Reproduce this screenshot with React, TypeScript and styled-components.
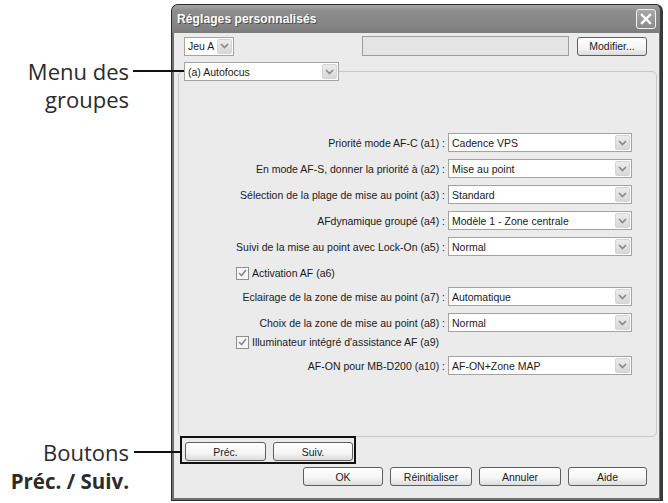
import React from 'react';
import styled, { createGlobalStyle } from 'styled-components';

const Global = createGlobalStyle`
  html, body { margin: 0; padding: 0; background: #ffffff; }
  body { width: 668px; height: 503px; overflow: hidden; }
  * { box-sizing: border-box; }
`;

const UI_FONT = `"Liberation Sans", Arial, sans-serif`;

const Page = styled.div`
  position: relative;
  width: 668px;
  height: 503px;
  display: flex;
  padding: 4px 5px 2px 171px;
  background: #ffffff;
`;

const Callout = styled.div<{ $top: number; $lineTop: number; $lineLeft: number; $lineWidth: number }>`
  position: absolute;
  left: 0;
  top: ${p => p.$top}px;
  width: 129px;
  text-align: right;
  font-family: "Open Sans", "Noto Sans", sans-serif;
  font-size: 22px;
  line-height: 28px;
  color: #2b2b2b;
  &::after {
    content: '';
    position: absolute;
    left: ${p => p.$lineLeft}px;
    top: ${p => p.$lineTop}px;
    width: ${p => p.$lineWidth}px;
    height: 2px;
    background: #111;
  }
`;

const CalloutStrong = styled.span`
  font-weight: 700;
  font-size: 20.5px;
`;

const Highlight = styled.div`
  position: absolute;
  left: 180px;
  top: 436px;
  width: 176px;
  height: 28px;
  border: 2px solid #111;
  pointer-events: none;
`;

const Window = styled.div`
  width: 492px;
  height: 497px;
  display: flex;
  flex-direction: column;
  background: #6f6f6f;
  border: 1px solid #2e2e2e;
  border-right: 3px solid #3a3a3a;
  border-radius: 7px 7px 0 0;
  overflow: hidden;
`;

const TitleBar = styled.div`
  height: 28px;
  flex: none;
  display: flex;
  align-items: center;
  justify-content: space-between;
  padding: 0 4px 0 5px;
  background: linear-gradient(#a6a6a6 0%, #8d8d8d 20%, #868686 70%, #7b7b7b 100%);
`;

const Title = styled.span`
  font-family: "Liberation Sans", Arial, sans-serif;
  font-weight: 700;
  font-size: 12px;
  letter-spacing: 0.1px;
  color: #ffffff;
  text-shadow: 1px 1px 0 #4a4a4a;
`;

const CloseButton = styled.div`
  width: 20px;
  height: 20px;
  border: 1px solid #f2f2f2;
  border-radius: 3px;
  background: linear-gradient(#a9a9a9, #8a8a8a);
  display: flex;
  align-items: center;
  justify-content: center;
`;

const Body = styled.div`
  flex: 1;
  display: flex;
  flex-direction: column;
  margin: 0 1px 2px 2px;
  padding: 3px 0 12px 0;
  background: #ebebeb;
  font-family: ${UI_FONT};
  font-size: 10.5px;
  color: #1a1a1a;
`;

const TopRow = styled.div`
  height: 20px;
  display: flex;
  align-items: center;
  padding: 0 12px 0 10px;
`;

const ComboBox = styled.div<{ $w: number }>`
  width: ${p => p.$w}px;
  height: 19px;
  flex: none;
  display: flex;
  align-items: center;
  background: #ffffff;
  border: 1px solid #a3a3a3;
  padding: 0 1px 0 3px;
  white-space: nowrap;
`;

const ComboText = styled.span`
  flex: 1;
  overflow: hidden;
`;

const ArrowBox = styled.div`
  width: 15px;
  height: 15px;
  flex: none;
  border-radius: 2px;
  background: linear-gradient(#ececec, #d8d8d8);
  border: 1px solid #d4d4d4;
  display: flex;
  align-items: center;
  justify-content: center;
`;

const TextField = styled.div`
  width: 207px;
  height: 20px;
  margin-left: auto;
  background: #e4e4e4;
  border: 1px solid #9e9e9e;
`;

const Button = styled.div<{ $w: number; $ml?: number }>`
  width: ${p => p.$w}px;
  height: 19px;
  flex: none;
  margin-left: ${p => p.$ml ?? 0}px;
  display: flex;
  align-items: center;
  justify-content: center;
  border: 1px solid #5e5e5e;
  border-radius: 3px;
  background: linear-gradient(#ffffff 0%, #f4f4f4 60%, #dcdcdc 100%);
  color: #1a1a1a;
`;

const Group = styled.fieldset`
  flex: 1;
  margin: 6px 2px 0 4px;
  padding: 52px 5px 0 5px;
  border: 1px solid #c9c9c9;
  border-radius: 5px;
  min-width: 0;
`;

const Legend = styled.legend`
  padding: 0;
  margin: 0;
`;

const Settings = styled.div`
  display: flex;
  flex-direction: column;
`;

const SettingRow = styled.div<{ $gap: number }>`
  display: grid;
  grid-template-columns: 261px 184px;
  column-gap: 3px;
  align-items: center;
  height: 19px;
  margin-top: ${p => p.$gap}px;
`;

const Label = styled.span`
  text-align: right;
  white-space: nowrap;
`;

const CheckRow = styled.div<{ $gap: number }>`
  display: flex;
  align-items: center;
  gap: 3px;
  height: 14px;
  margin-top: ${p => p.$gap}px;
  padding-left: 52px;
`;

const CheckBox = styled.div`
  width: 13px;
  height: 13px;
  border: 1px solid #8f8f8f;
  background: #f6f6f6;
  display: flex;
  align-items: center;
  justify-content: center;
`;

const NavRow = styled.div`
  display: flex;
  gap: 7px;
  margin-top: 5px;
  padding-left: 11px;
`;

const ActionRow = styled.div`
  display: flex;
  justify-content: flex-end;
  gap: 7px;
  margin-top: 6px;
  padding-right: 12px;
`;

const Chevron = () => (
  <svg width="9" height="6" viewBox="0 0 9 6">
    <polyline points="1,1 4.5,4.5 8,1" fill="none" stroke="#8a8a8a" strokeWidth="1.7" />
  </svg>
);

const Combo = ({ w, text }: { w: number; text: string }) => (
  <ComboBox $w={w}>
    <ComboText>{text}</ComboText>
    <ArrowBox>
      <Chevron />
    </ArrowBox>
  </ComboBox>
);

const Check = ({ gap, text }: { gap: number; text: string }) => (
  <CheckRow $gap={gap}>
    <CheckBox>
      <svg width="9" height="8" viewBox="0 0 9 8">
        <polyline points="1,4 3.5,6.5 8,1" fill="none" stroke="#8a8a8a" strokeWidth="1.6" />
      </svg>
    </CheckBox>
    <span>{text}</span>
  </CheckRow>
);

const Setting = ({ gap, label, value }: { gap: number; label: string; value: string }) => (
  <SettingRow $gap={gap}>
    <Label>{label}</Label>
    <Combo w={184} text={value} />
  </SettingRow>
);

export default function App() {
  return (
    <Page>
      <Global />
      <Callout $top={57} $lineTop={13} $lineLeft={133} $lineWidth={51}>
        Menu des
        <br />
        groupes
      </Callout>
      <Callout $top={438} $lineTop={13} $lineLeft={134} $lineWidth={46}>
        Boutons
        <br />
        <CalloutStrong>Préc. / Suiv.</CalloutStrong>
      </Callout>
      <Window>
        <TitleBar>
          <Title>Réglages personnalisés</Title>
          <CloseButton>
            <svg width="12" height="12" viewBox="0 0 12 12">
              <path d="M2 2 L10 10 M10 2 L2 10" stroke="#ffffff" strokeWidth="2.4" strokeLinecap="square" />
            </svg>
          </CloseButton>
        </TitleBar>
        <Body>
          <TopRow>
            <Combo w={50} text="Jeu A" />
            <TextField />
            <Button $w={70} $ml={8}>Modifier...</Button>
          </TopRow>
          <Group>
            <Legend>
              <Combo w={155} text="(a) Autofocus" />
            </Legend>
            <Settings>
              <Setting gap={0} label="Priorité mode AF-C (a1) :" value="Cadence VPS" />
              <Setting gap={7} label="En mode AF-S, donner la priorité à (a2) :" value="Mise au point" />
              <Setting gap={7} label="Sélection de la plage de mise au point (a3) :" value="Standard" />
              <Setting gap={7} label="AFdynamique groupé (a4) :" value="Modèle 1 - Zone centrale" />
              <Setting gap={7} label="Suivi de la mise au point avec Lock-On (a5) :" value="Normal" />
              <Check gap={10} text="Activation AF (a6)" />
              <Setting gap={7} label="Eclairage de la zone de mise au point (a7) :" value="Automatique" />
              <Setting gap={7} label="Choix de la zone de mise au point (a8) :" value="Normal" />
              <Check gap={3} text="Illuminateur intégré d'assistance AF (a9)" />
              <Setting gap={7} label="AF-ON pour MB-D200 (a10) :" value="AF-ON+Zone MAP" />
            </Settings>
          </Group>
          <NavRow>
            <Button $w={81}>Préc.</Button>
            <Button $w={80}>Suiv.</Button>
          </NavRow>
          <ActionRow>
            <Button $w={80}>OK</Button>
            <Button $w={82}>Réinitialiser</Button>
            <Button $w={82}>Annuler</Button>
            <Button $w={79}>Aide</Button>
          </ActionRow>
        </Body>
      </Window>
      <Highlight />
    </Page>
  );
}
